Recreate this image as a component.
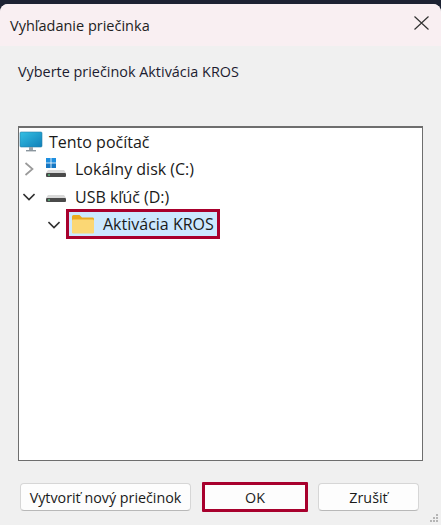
<div class="screen">
  <div class="dialog">
    <header class="titlebar">
      <span class="title">Vyhľadanie priečinka</span>
      <svg class="close" width="15" height="14" viewBox="0 0 15 14"><path d="M.5 .5L14.5 13.5M14.5 .5L.5 13.5" stroke="#333" stroke-width="1.2" fill="none"/></svg>
    </header>
    <div class="body">
      <p class="prompt">Vyberte priečinok Aktivácia KROS</p>
      <div class="tree">
        <div class="row root">
          <svg class="icon" width="24" height="24" viewBox="0 0 24 24">
            <defs><linearGradient id="scr" x1="0" y1="0" x2="1" y2="1"><stop offset="0" stop-color="#35c0e4"/><stop offset="1" stop-color="#0f7fb8"/></linearGradient></defs>
            <rect x="1" y="2" width="22" height="15" rx="1" fill="url(#scr)" stroke="#2a7fa8" stroke-width=".6"/>
            <rect x="10" y="17" width="4" height="3" fill="#9aa5ad"/>
            <rect x="7" y="20" width="10" height="1.4" fill="#8b969e"/>
          </svg>
          <span>Tento počítač</span>
        </div>
        <div class="row lvl1">
          <svg class="chev" width="12" height="14" viewBox="0 0 12 14"><path d="M2.5 1L9.5 7L2.5 13" stroke="#9a9a9a" stroke-width="1.7" fill="none"/></svg>
          <svg class="icon" width="24" height="24" viewBox="0 0 24 24">
            <rect x="3" y="1" width="4.6" height="4.6" fill="#1e8fe0"/><rect x="8.4" y="1" width="4.6" height="4.6" fill="#1e8fe0"/>
            <rect x="3" y="6.4" width="4.6" height="4.6" fill="#1678c4"/><rect x="8.4" y="6.4" width="4.6" height="4.6" fill="#1678c4"/>
            <path d="M5 13H21L23 16H3Z" fill="#d9d9d9"/>
            <rect x="3" y="16" width="20" height="4" rx="1" fill="#4a4a4a"/>
            <rect x="5" y="17.4" width="2" height="1.2" fill="#5fd08a"/>
          </svg>
          <span>Lokálny disk (C:)</span>
        </div>
        <div class="row lvl1">
          <svg class="chev" width="12" height="14" viewBox="0 0 14 14"><path d="M.5 3.5L7 10L13.5 3.5" stroke="#333" stroke-width="1.9" fill="none"/></svg>
          <svg class="icon" width="24" height="24" viewBox="0 0 24 24">
            <path d="M5 10H21L23 13H3Z" fill="#d9d9d9"/>
            <rect x="3" y="13" width="20" height="4" rx="1" fill="#4a4a4a"/>
            <rect x="5" y="14.4" width="2" height="1.2" fill="#5fd08a"/>
          </svg>
          <span>USB kľúč (D:)</span>
        </div>
        <div class="row lvl2">
          <svg class="chev" width="12" height="14" viewBox="0 0 14 14"><path d="M.5 3.5L7 10L13.5 3.5" stroke="#333" stroke-width="1.9" fill="none"/></svg>
          <div class="selected">
            <svg class="icon" width="24" height="24" viewBox="0 0 24 24">
              <path d="M1 4.5Q1 3 2.5 3H8.5L11 5.5H22Q23 5.5 23 7V9H1Z" fill="#eaa81e"/>
              <rect x="1" y="7.5" width="22" height="14" rx="1.2" fill="#fbd774"/>
            </svg>
            <span>Aktivácia KROS</span>
          </div>
        </div>
      </div>
      <div class="actions">
        <button class="btn new">Vytvoriť nový priečinok</button>
        <button class="btn ok">OK</button>
        <button class="btn cancel">Zrušiť</button>
      </div>
    </div>
    <svg class="grip" width="10" height="10" viewBox="0 0 10 10" fill="#b5b5b5">
      <rect x="7" y="1" width="2" height="2"/>
      <rect x="4" y="4" width="2" height="2"/><rect x="7" y="4" width="2" height="2"/>
      <rect x="1" y="7" width="2" height="2"/><rect x="4" y="7" width="2" height="2"/><rect x="7" y="7" width="2" height="2"/>
    </svg>
  </div>
</div>

<style>
  :global(body) {
    margin: 0;
    background: #1d2233;
  }

  .screen {
    width: 441px;
    height: 525px;
    padding-top: 4px;
    box-sizing: border-box;
    font-family: "Open Sans", "Noto Sans", sans-serif;
    color: #1a1a1a;
  }

  .dialog {
    position: relative;
    height: 521px;
    border-radius: 8px 8px 0 0;
    overflow: hidden;
    background: #f0f0f0;
    display: flex;
    flex-direction: column;
  }

  .titlebar {
    height: 42px;
    flex: none;
    background: #f9eff2;
    display: flex;
    align-items: center;
    justify-content: space-between;
    padding: 0 12px 0 10px;
  }

  .title {
    font-size: 14.5px;
    color: #222;
  }

  .close {
    margin-top: -4px;
  }

  .body {
    flex: 1;
    display: flex;
    flex-direction: column;
    padding: 0 18px 0;
  }

  .prompt {
    margin: 17px 0 0;
    font-size: 14.4px;
    height: 18px;
    line-height: 18px;
    color: #1c1c30;
  }

  .tree {
    margin-top: 45px;
    height: 335px;
    box-sizing: border-box;
    background: #fff;
    border: 1px solid #6e6e6e;
    border-width: 2px 1px 1px 1px;
    font-size: 16px;
  }

  .row {
    height: 27.6px;
    display: flex;
    align-items: center;
  }

  .root { gap: 6px; }
  .lvl1 { padding-left: 4px; gap: 8px; }
  .lvl2 { padding-left: 29px; gap: 6px; }

  .selected {
    display: flex;
    align-items: center;
    gap: 8px;
    height: 24px;
    margin-top: -1px;
    padding: 0 3px 0 2px;
    background: #cce8ff;
    border: 3px solid #a8002d;
  }

  .actions {
    margin-top: 21px;
    display: flex;
    align-items: center;
    padding-left: 2px;
  }

  .btn {
    height: 28px;
    box-sizing: border-box;
    background: #fdfdfd;
    border: 1px solid #d6d6d6;
    border-bottom-color: #b8b8b8;
    border-radius: 4px;
    font-family: inherit;
    font-size: 14.3px;
    color: #1a1a1a;
    padding: 0;
    white-space: nowrap;
  }

  .new { width: 171px; }
  .ok {
    width: 106px;
    height: 30px;
    margin-left: 11px;
    border: 3px solid #a8002d;
    border-radius: 1px;
  }
  .cancel { width: 101px; margin-left: 10px; }

  .grip {
    position: absolute;
    right: 2px;
    bottom: 2px;
  }
</style>
